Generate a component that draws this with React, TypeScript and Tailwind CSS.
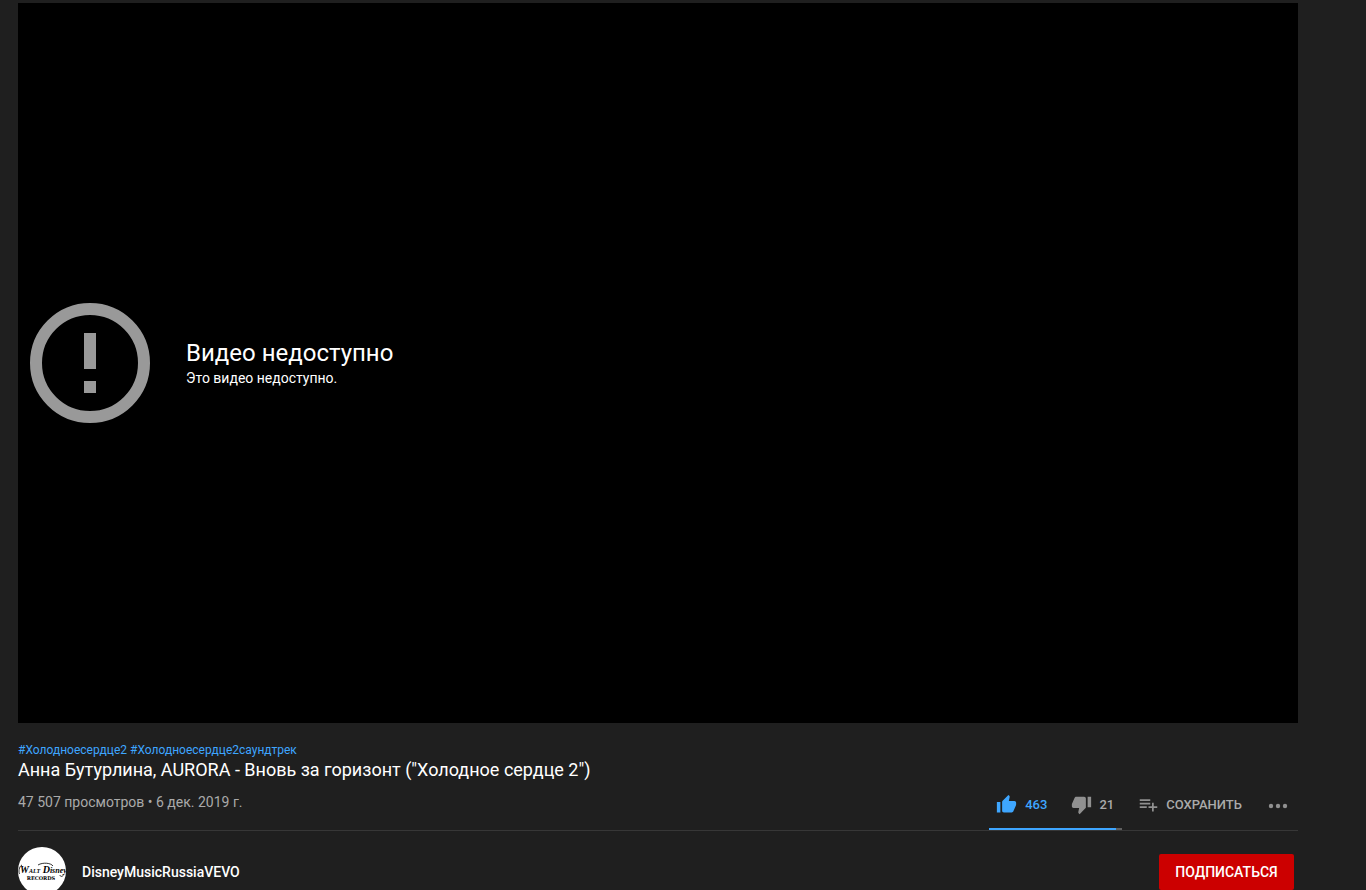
import React, { useState } from 'react';

const LIKES = 463;
const DISLIKES = 21;

const Icon = ({ d }: { d: string }) => (
  <svg viewBox="0 0 24 24" className="block size-[21px] shrink-0 fill-current" aria-hidden="true">
    <path d={d} />
  </svg>
);

const Player = () => (
  <section className="flex aspect-video items-center bg-black pl-3 text-white">
    <svg viewBox="0 0 120 120" className="size-[120px] shrink-0" aria-hidden="true">
      <circle cx="60" cy="60" r="54" fill="none" stroke="#999" strokeWidth="12" />
      <path fill="#999" d="M54 30h12v36H54zM54 78h12v12H54z" />
    </svg>
    <div className="pl-9">
      <div className="text-2xl leading-[30px]">Видео недоступно</div>
      <div className="text-sm leading-5">Это видео недоступно.</div>
    </div>
  </section>
);

const Avatar = () => (
  <svg viewBox="0 0 48 48" className="size-12 shrink-0 self-start" role="img" aria-label="Walt Disney Records">
    <defs>
      <clipPath id="avatar">
        <circle cx="24" cy="24" r="24" />
      </clipPath>
    </defs>
    <circle cx="24" cy="24" r="24" fill="#fff" />
    <g clipPath="url(#avatar)" fill="#000" fontFamily="'Liberation Serif', serif" fontWeight="700">
      <text x="2" y="26" fontSize="10" fontStyle="italic">
        W<tspan fontSize="6">ALT</tspan> D<tspan fontSize="8">isney</tspan>
      </text>
      {/* swashes round the W, the D and the y */}
      <path
        d="M4 18C1 19 0 26 2 27M20 18c5-3 13-2 15 1M46 27c-1 3-4 3-4 1"
        fill="none"
        stroke="#000"
        strokeWidth="0.8"
      />
      <text x="23" y="33" fontSize="5" textAnchor="middle" fontFamily="'DejaVu Serif', serif">
        RECORDS
      </text>
    </g>
  </svg>
);

const Actions = () => {
  const [liked, setLiked] = useState(true);
  const share = (LIKES / (LIKES + DISLIKES)) * 100;

  return (
    <div className="flex h-12 text-[13px] leading-5 font-medium text-[#909090]">
      <div className="flex w-[133px] flex-col justify-between">
        <div className="flex justify-between pr-2 pl-[7px] pt-3">
          <button
            type="button"
            aria-pressed={liked}
            onClick={() => setLiked(!liked)}
            className={liked ? 'flex items-center gap-2 text-[#3ea6ff]' : 'flex items-center gap-2'}
          >
            <Icon d="M1 21h4V9H1v12zm22-11c0-1.1-.9-2-2-2h-6.31l.95-4.57.03-.32c0-.41-.17-.79-.44-1.06L14.17 1 7.59 7.59C7.22 7.95 7 8.45 7 9v10c0 1.1.9 2 2 2h9c.83 0 1.54-.5 1.84-1.22l3.02-7.05c.09-.23.14-.47.14-.73v-2z" />
            {LIKES}
          </button>
          <button type="button" className="flex items-center gap-[7px]">
            <Icon d="M15 3H6c-.83 0-1.54.5-1.84 1.22l-3.02 7.05c-.09.23-.14.47-.14.73v2c0 1.1.9 2 2 2h6.31l-.95 4.57-.03.32c0 .41.17.79.44 1.06L9.83 23l6.59-6.59c.36-.36.58-.86.58-1.41V5c0-1.1-.9-2-2-2zm4 0v12h4V3h-4z" />
            <span className="text-[#aaa]">{DISLIKES}</span>
          </button>
        </div>
        <div className="h-0.5 bg-[#606060]">
          <div className="h-full bg-[#3ea6ff]" style={{ width: `${share}%` }} />
        </div>
      </div>
      <button type="button" className="ml-4 flex items-center gap-[7px] self-start pt-3">
        <Icon d="M14 10H2v2h12v-2zm0-4H2v2h12V6zm4 8v-4h-2v4h-4v2h4v4h2v-4h4v-2h-4zM2 16h8v-2H2v2z" />
        <span className="text-[#aaa]">СОХРАНИТЬ</span>
      </button>
      <button type="button" aria-label="Ещё" className="mr-2 ml-6 self-start pt-3">
        <svg viewBox="0 0 24 24" className="block size-6 fill-current">
          <circle cx="5" cy="12" r="2.2" />
          <circle cx="12" cy="12" r="2.2" />
          <circle cx="19" cy="12" r="2.2" />
        </svg>
      </button>
    </div>
  );
};

const App = () => (
  <main className="h-screen overflow-hidden bg-[#1f1f1f] pt-[3px] pr-[68px] pl-[18px] font-[Roboto,sans-serif]">
    <Player />
    <div className="pt-[19px]">
      <div className="flex gap-[3px] text-xs leading-4 text-[#3ea6ff]">
        <a href="#tag1">#Холодноесердце2</a>
        <a href="#tag2">#Холодноесердце2саундтрек</a>
      </div>
      <h1 className="text-lg leading-6 text-white">
        Анна Бутурлина, AURORA - Вновь за горизонт ("Холодное сердце 2")
      </h1>
      <div className="flex justify-between border-b border-[#373737]">
        <p className="pt-[10px] text-sm leading-5 text-[#aaa]">47 507 просмотров • 6 дек. 2019 г.</p>
        <Actions />
      </div>
    </div>
    <div className="mt-4 flex h-[50px] items-center pr-1 text-sm font-medium text-white">
      <Avatar />
      <a href="#channel" className="ml-4">DisneyMusicRussiaVEVO</a>
      <button type="button" className="ml-auto h-9 min-w-[135px] rounded-xs bg-[#c00] px-4">
        ПОДПИСАТЬСЯ
      </button>
    </div>
  </main>
);

export default App;
